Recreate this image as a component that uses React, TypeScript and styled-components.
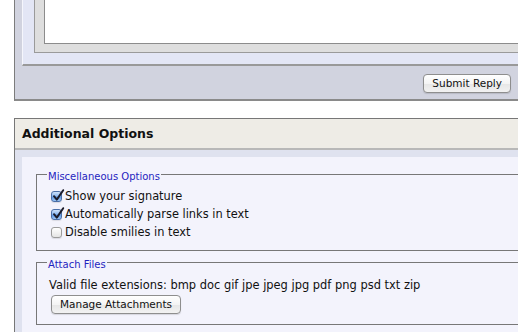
import React from "react";
import styled, { createGlobalStyle } from "styled-components";

const Global = createGlobalStyle`
  html, body { margin: 0; padding: 0; background: #ffffff; overflow: hidden; }
  body { font-family: "DejaVu Sans", Verdana, sans-serif; color: #000; }
`;

const Page = styled.div`
  margin-left: 14px;
  width: 505px;
  display: flex;
  flex-direction: column;
`;

const ReplyPanel = styled.div`
  background: #d1d3df;
  border-left: 1px solid #7c7c7c;
  border-bottom: 2px solid #8a8a8a;
  padding-left: 7px;
  display: flex;
  flex-direction: column;
`;

const EditorFrame = styled.div`
  background: #e3e6f5;
  border-left: 1px solid #f5f6fc;
  border-bottom: 2px solid #999999;
  padding: 0 0 11px 11px;
`;

const EditorWell = styled.div`
  background: #dedede;
  border-left: 1px solid #9a9a9a;
  border-bottom: 1px solid #9a9a9a;
  padding: 0 0 8px 9px;
`;

const TextArea = styled.div`
  height: 43px;
  background: #ffffff;
  border-left: 1px solid #8c8c8c;
  border-bottom: 1px solid #8c8c8c;
`;

const ReplyFooter = styled.div`
  height: 33px;
  display: flex;
  justify-content: flex-end;
  align-items: flex-start;
  padding: 8px 8px 0 0;
  box-sizing: border-box;
`;

const AquaButton = styled.button<{ $pad?: number }>`
  height: 19px;
  padding: 0 ${(p) => p.$pad ?? 8}px;
  font-family: "DejaVu Sans", "Lucida Grande", sans-serif;
  font-size: 10.5px;
  color: #111;
  background: linear-gradient(#ffffff 0%, #f4f4f4 50%, #e6e6e6 51%, #f2f2f2 100%);
  border: 1px solid #8e8e8e;
  border-radius: 4px;
  box-shadow: 0 1px 1px rgba(0, 0, 0, 0.12);
  line-height: 17px;
  white-space: nowrap;
  cursor: default;
`;

const OptionsPanel = styled.div`
  margin-top: 17px;
  border-top: 1px solid #777777;
  border-left: 1px solid #777777;
  display: flex;
  flex-direction: column;
`;

const PanelHeader = styled.div`
  height: 29px;
  background: #eeece6;
  border-bottom: 2px solid #b8b8b8;
  padding-left: 7px;
  display: flex;
  align-items: center;
  font-family: "DejaVu Sans", Verdana, sans-serif;
  font-weight: bold;
  font-size: 12.5px;
  color: #111;
`;

const PanelBody = styled.div`
  background: #dfe2ef;
  padding: 7px 0 0 7px;
`;

const PanelContent = styled.div`
  background: #f3f3fc;
  padding: 8px 0 20px 14px;
  display: flex;
  flex-direction: column;
  gap: 2px;
`;

const Group = styled.fieldset<{ $pt: number; $pb: number }>`
  margin: 0;
  border: 1px solid #777777;
  border-right: none;
  padding: ${(p) => p.$pt}px 0 ${(p) => p.$pb}px 10px;
  min-width: 0;
`;

const Legend = styled.legend`
  padding: 4px 1px 0 1px;
  font-family: "DejaVu Sans", "Lucida Grande", sans-serif;
  font-size: 10px;
  line-height: 15px;
  color: #1f1fbf;
`;

const CheckRow = styled.label`
  height: 18px;
  display: flex;
  align-items: center;
  gap: 3px;
  padding-left: 4px;
  font-size: 11.4px;
  color: #111;
`;

const Box = styled.span<{ $on: boolean }>`
  position: relative;
  width: 11px;
  height: 11px;
  box-sizing: border-box;
  border-radius: 3px;
  border: 1px solid ${(p) => (p.$on ? "#4a6fa8" : "#9b9b9b")};
  background: ${(p) =>
    p.$on
      ? "linear-gradient(#cfe3fb 0%, #8fbaf0 45%, #5d98e4 55%, #9cc6f6 100%)"
      : "linear-gradient(#ffffff 0%, #f2f2f2 50%, #e4e4e4 100%)"};
  box-shadow: 0 1px 1px rgba(0, 0, 0, 0.1);
  flex: none;
`;

const Tick = styled.svg`
  position: absolute;
  left: 0px;
  top: -3px;
  width: 13px;
  height: 13px;
  overflow: visible;
`;

const InfoLine = styled.div`
  height: 18px;
  display: flex;
  align-items: center;
  padding-left: 2px;
  font-size: 11.45px;
  color: #111;
  white-space: nowrap;
`;

const ButtonRow = styled.div`
  margin-top: 1px;
  padding-left: 4px;
  display: flex;
`;

function Check({ on, label }: { on: boolean; label: string }) {
  return (
    <CheckRow>
      <Box $on={on}>
        {on && (
          <Tick viewBox="0 0 13 13">
            <path
              d="M2 7.2 L4.8 10.6 L11.2 1.2"
              fill="none"
              stroke="#1c1c2a"
              strokeWidth="2"
              strokeLinecap="round"
              strokeLinejoin="round"
            />
          </Tick>
        )}
      </Box>
      <span>{label}</span>
    </CheckRow>
  );
}

export default function App() {
  return (
    <>
      <Global />
      <Page>
        <ReplyPanel>
          <EditorFrame>
            <EditorWell>
              <TextArea />
            </EditorWell>
          </EditorFrame>
          <ReplyFooter>
            <AquaButton $pad={8}>Submit Reply</AquaButton>
          </ReplyFooter>
        </ReplyPanel>

        <OptionsPanel>
          <PanelHeader>Additional Options</PanelHeader>
          <PanelBody>
            <PanelContent>
              <Group $pt={3} $pb={9}>
                <Legend>Miscellaneous Options</Legend>
                <Check on label="Show your signature" />
                <Check on label="Automatically parse links in text" />
                <Check on={false} label="Disable smilies in text" />
              </Group>
              <Group $pt={4} $pb={10}>
                <Legend>Attach Files</Legend>
                <InfoLine>
                  Valid file extensions: bmp doc gif jpe jpeg jpg pdf png psd txt zip
                </InfoLine>
                <ButtonRow>
                  <AquaButton $pad={8}>Manage Attachments</AquaButton>
                </ButtonRow>
              </Group>
            </PanelContent>
          </PanelBody>
        </OptionsPanel>
      </Page>
    </>
  );
}
